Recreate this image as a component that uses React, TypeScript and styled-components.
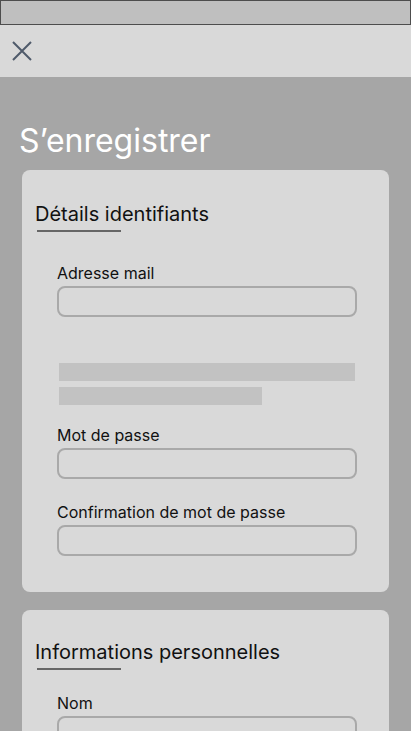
import styled, { createGlobalStyle } from "styled-components";

const GlobalStyle = createGlobalStyle`
  html, body {
    margin: 0;
    padding: 0;
    background: #a6a6a6;
  }
  body {
    font-family: Inter, "Noto Sans", "Liberation Sans", sans-serif;
    color: #111;
  }
  * { box-sizing: border-box; }
`;

const Page = styled.div`
  min-height: 100vh;
  background: #a6a6a6;
`;

const StatusBar = styled.div`
  height: 25px;
  background: #bfbfbf;
  border: 1px solid #4d4d4d;
`;

const Header = styled.header`
  height: 52px;
  display: flex;
  align-items: center;
  padding-left: 12px;
  background: #d9d9d9;
`;

const CloseButton = styled.button`
  display: flex;
  padding: 0;
  border: none;
  background: none;
  color: #4f5a6a;
  cursor: pointer;
`;

const Main = styled.main`
  display: flex;
  flex-direction: column;
  gap: 18px;
  padding: 44px 22px 24px;
`;

const Title = styled.h1`
  margin: 0 0 -9px -3px;
  font-size: 32px;
  line-height: 40px;
  font-weight: 400;
  color: #fff;
`;

const Card = styled.section<{ $top?: number }>`
  background: #d9d9d9;
  border-radius: 8px;
  padding: ${(p) => p.$top ?? 32}px 32px 36px 13px;
`;

const SectionTitle = styled.h2`
  margin: 0;
  font-size: 20px;
  line-height: 24px;
  font-weight: 400;
`;

const Underline = styled.div`
  width: 84px;
  height: 2px;
  margin: 4px 0 0 2px;
  background: #666;
`;

const Field = styled.label<{ $top: number }>`
  display: flex;
  flex-direction: column;
  gap: 3px;
  margin: ${(p) => p.$top}px 0 0 22px;
`;

const LabelText = styled.span`
  font-size: 16px;
  line-height: 20px;
`;

const Input = styled.input`
  width: 100%;
  height: 31px;
  padding: 0 10px;
  border: 2px solid #a9a9a9;
  border-radius: 8px;
  background: transparent;
  font: inherit;
  outline: none;
`;

const Hint = styled.div`
  display: flex;
  flex-direction: column;
  gap: 6px;
  margin: 46px 0 0 24px;
`;

const HintLine = styled.div<{ $w: string }>`
  width: ${(p) => p.$w};
  height: 18px;
  background: #c2c2c2;
`;

const CloseIcon = () => (
  <svg width="20" height="20" viewBox="0 0 20 20" fill="none">
    <path d="M1 1L19 19M19 1L1 19" stroke="currentColor" strokeWidth="2" />
  </svg>
);

const App = () => (
  <Page>
    <GlobalStyle />
    <StatusBar />
    <Header>
      <CloseButton aria-label="Fermer">
        <CloseIcon />
      </CloseButton>
    </Header>
    <Main>
      <Title>S’enregistrer</Title>
      <Card>
        <SectionTitle>Détails identifiants</SectionTitle>
        <Underline />
        <Field $top={31}>
          <LabelText>Adresse mail</LabelText>
          <Input type="email" />
        </Field>
        <Hint>
          <HintLine $w="296px" />
          <HintLine $w="203px" />
        </Hint>
        <Field $top={20}>
          <LabelText>Mot de passe</LabelText>
          <Input type="password" />
        </Field>
        <Field $top={23}>
          <LabelText>Confirmation de mot de passe</LabelText>
          <Input type="password" />
        </Field>
      </Card>
      <Card $top={30}>
        <SectionTitle>Informations personnelles</SectionTitle>
        <Underline />
        <Field $top={23}>
          <LabelText>Nom</LabelText>
          <Input type="text" />
        </Field>
      </Card>
    </Main>
  </Page>
);

export default App;
